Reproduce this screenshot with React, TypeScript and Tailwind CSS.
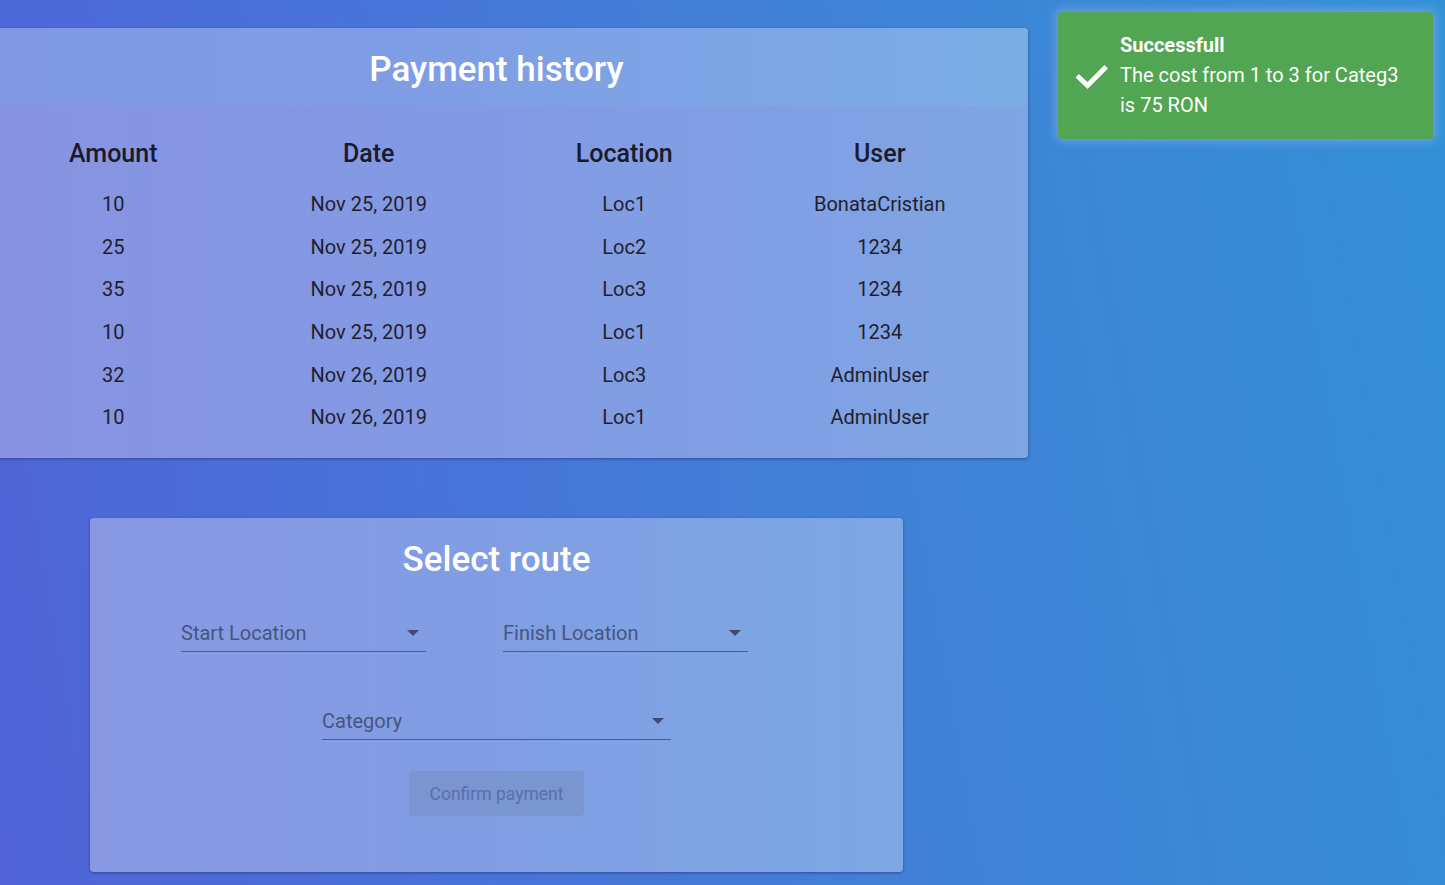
import React from "react";

const rows = [
  ["10", "Nov 25, 2019", "Loc1", "BonataCristian"],
  ["25", "Nov 25, 2019", "Loc2", "1234"],
  ["35", "Nov 25, 2019", "Loc3", "1234"],
  ["10", "Nov 25, 2019", "Loc1", "1234"],
  ["32", "Nov 26, 2019", "Loc3", "AdminUser"],
  ["10", "Nov 26, 2019", "Loc1", "AdminUser"],
];

function SelectField({ label, width }: { label: string; width: string }) {
  return (
    <div className={`${width} h-[42px] flex items-end justify-between border-b border-[#4b5c8f] pb-[6px]`}>
      <span className="text-[20px] leading-[24px] text-[#45567f]">{label}</span>
      <svg width="12" height="6" viewBox="0 0 12 6" className="mb-[9px] mr-[7px]">
        <path d="M0 0 L12 0 L6 6 Z" fill="#3e4a72" />
      </svg>
    </div>
  );
}

export default function App() {
  return (
    <div
      className="relative min-h-screen w-full overflow-hidden bg-[linear-gradient(80deg,#5163d7_0%,#4c6bd8_15%,#437dd7_50%,#3a89d6_80%,#3391d6_100%)]"
      style={{ fontFamily: "Roboto, 'Liberation Sans', sans-serif" }}
    >
      <div className="w-[993px] flex flex-col items-center pt-[28px] pb-[13px]">
        {/* Payment history card */}
        <div className="w-[1062px] shrink-0 rounded-[4px] overflow-hidden shadow-[0_1px_3px_rgba(30,40,110,0.55)] bg-[linear-gradient(90deg,#8893e2_0%,#8399e3_45%,#7fa5e3_100%)]">
          <div className="h-[78px] flex items-center justify-center bg-[linear-gradient(90deg,#8098e4_0%,#7f9ee5_45%,#7aade4_100%)]">
            <h1 className="text-[35px] font-medium text-white leading-[40px] mt-[5px]">Payment history</h1>
          </div>
          <div className="px-[20px] pt-[20px] pb-[19px]">
            <div className="grid grid-cols-4 h-[56px] items-center text-center text-[25px] font-medium text-[#1b1a2b]">
              <div>Amount</div>
              <div>Date</div>
              <div>Location</div>
              <div>User</div>
            </div>
            <div className="mt-[1px]">
              {rows.map((r, i) => (
                <div key={i} className="grid grid-cols-4 h-[42.6px] items-center text-center text-[20px] text-[#1f1f2e]">
                  {r.map((c, j) => (
                    <div key={j}>{c}</div>
                  ))}
                </div>
              ))}
            </div>
          </div>
        </div>

        {/* Select route card */}
        <div className="mt-[60px] w-[813px] shrink-0 rounded-[4px] shadow-[0_1px_3px_rgba(30,40,110,0.55)] bg-[linear-gradient(90deg,#8898e3_0%,#819ee3_50%,#7ca8e3_100%)] pt-[22px] pb-[56px] flex flex-col items-center">
          <h2 className="text-[35px] font-medium text-white leading-[40px]">Select route</h2>
          <div className="mt-[30px] flex gap-[77px] pr-[64px]">
            <SelectField label="Start Location" width="w-[245px]" />
            <SelectField label="Finish Location" width="w-[245px]" />
          </div>
          <div className="mt-[46px]">
            <SelectField label="Category" width="w-[349px]" />
          </div>
          <button className="mt-[31px] w-[175px] h-[45px] rounded-[4px] bg-[#7893cc]/80 text-[17.5px] leading-[24px] pt-[2px] text-[#5870ab]">
            Confirm payment
          </button>
        </div>
      </div>

      {/* Toast */}
      <div className="absolute top-[12px] right-[12px] w-[375px] h-[127px] rounded-[4px] bg-[#52a552] shadow-[0_0_10px_3px_rgba(120,170,230,0.7)] flex items-center pl-[18px] pb-[2px]">
        <svg width="32" height="24" viewBox="0 0 32 24" className="shrink-0 mt-[4px]">
          <path d="M3 12.5 L11.5 20.5 L28.5 3.5" fill="none" stroke="white" strokeWidth="5" strokeLinecap="square" strokeLinejoin="miter" />
        </svg>
        <div className="ml-[12px] text-white text-[20px] leading-[30px]">
          <div className="font-bold">Successfull</div>
          <div>The cost from 1 to 3 for Categ3</div>
          <div>is 75 RON</div>
        </div>
      </div>
    </div>
  );
}
